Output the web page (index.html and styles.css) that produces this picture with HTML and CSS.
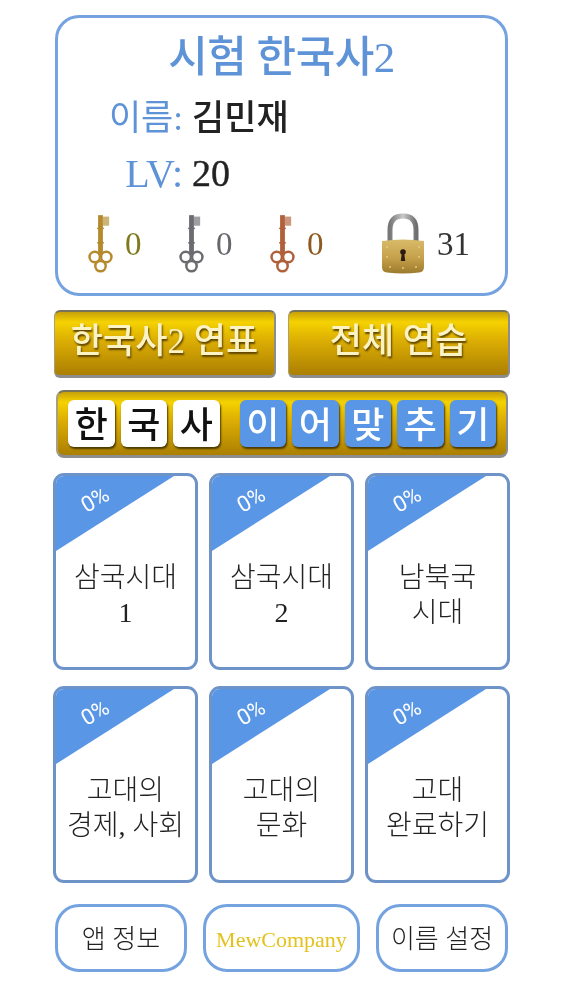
FILE: index.html
```html
<!DOCTYPE html>
<html lang="ko">
<head>
<meta charset="utf-8">
<title>시험 한국사2</title>
<link rel="stylesheet" href="styles.css">
</head>
<body>
<svg class="defs" width="0" height="0" aria-hidden="true">
  <defs>
    <symbol id="key" viewBox="0 0 26 62">
      <rect x="10.500" y="1" width="5" height="41" fill="currentColor"/>
      <rect x="15.500" y="2.500" width="6.500" height="9.500" fill="currentColor" opacity=".65"/>
      <rect x="9.500" y="14" width="7" height="1.500" fill="currentColor"/>
      <rect x="9.500" y="29" width="7" height="1.500" fill="currentColor"/>
      <g fill="none" stroke="currentColor" stroke-width="2.600">
        <circle cx="7" cy="44.500" r="5.400"/>
        <circle cx="19" cy="44.500" r="5.400"/>
        <circle cx="13" cy="54" r="5.400"/>
      </g>
    </symbol>
    <linearGradient id="lockBody" x1="0" y1="0" x2="0" y2="1">
      <stop offset="0" stop-color="#d9bb6a"/>
      <stop offset=".55" stop-color="#c5a04a"/>
      <stop offset="1" stop-color="#9c7a2e"/>
    </linearGradient>
    <linearGradient id="lockBar" x1="0" y1="0" x2="1" y2="0">
      <stop offset="0" stop-color="#777"/>
      <stop offset=".5" stop-color="#c9c9c9"/>
      <stop offset="1" stop-color="#6f6f6f"/>
    </linearGradient>
  </defs>
</svg>
<main class="page">
  <section class="info">
    <h1 class="title">시험 한국사2</h1>
    <div class="row row-name"><span class="label">이름:</span><span class="value">김민재</span></div>
    <div class="row row-lv"><span class="label">LV:</span><span class="value">20</span></div>
    <div class="stats">
      <svg class="key key-gold"><use href="#key"/></svg><span class="num num-gold">0</span>
      <svg class="key key-silver"><use href="#key"/></svg><span class="num num-silver">0</span>
      <svg class="key key-bronze"><use href="#key"/></svg><span class="num num-bronze">0</span>
      <svg class="lock" viewBox="0 0 44 62">
        <path d="M9 30V17C9 7 14 3 22 3s13 4 13 14v13" fill="none" stroke="url(#lockBar)" stroke-width="5"/>
        <path d="M1 28q21-3 42 0v26q0 5-5 5.500q-16 2-32 0q-5-.5-5-5.500z" fill="url(#lockBody)"/>
        <g fill="#e8cf85">
          <circle cx="6" cy="34" r=".9"/><circle cx="38" cy="34" r=".9"/>
          <circle cx="6" cy="44" r=".9"/><circle cx="38" cy="44" r=".9"/>
          <circle cx="9" cy="54" r=".9"/><circle cx="35" cy="54" r=".9"/><circle cx="22" cy="55" r=".9"/>
        </g>
        <circle cx="22" cy="39" r="2.800" fill="#2a1a10"/>
        <path d="M20.800 40h2.400l1 8h-4.400z" fill="#2a1a10"/>
      </svg>
      <span class="num num-lock">31</span>
    </div>
  </section>

  <div class="actions">
    <button class="gold-btn">한국사2 연표</button>
    <button class="gold-btn">전체 연습</button>
  </div>

  <div class="banner">
    <span class="tile">한</span><span class="tile">국</span><span class="tile tile-last">사</span>
    <span class="tile tile-blue">이</span><span class="tile tile-blue">어</span><span class="tile tile-blue">맞</span><span class="tile tile-blue">추</span><span class="tile tile-blue">기</span>
  </div>

  <div class="grid">
    <a class="card"><span class="ribbon"></span><span class="pct">0%</span><span class="card-text">삼국시대<br>1</span></a>
    <a class="card"><span class="ribbon"></span><span class="pct">0%</span><span class="card-text">삼국시대<br>2</span></a>
    <a class="card"><span class="ribbon"></span><span class="pct">0%</span><span class="card-text">남북국<br>시대</span></a>
    <a class="card"><span class="ribbon"></span><span class="pct">0%</span><span class="card-text">고대의<br>경제, 사회</span></a>
    <a class="card"><span class="ribbon"></span><span class="pct">0%</span><span class="card-text">고대의<br>문화</span></a>
    <a class="card"><span class="ribbon"></span><span class="pct">0%</span><span class="card-text">고대<br>완료하기</span></a>
  </div>

  <div class="footer">
    <button class="foot foot-a">앱 정보</button>
    <button class="foot foot-b">MewCompany</button>
    <button class="foot foot-c">이름 설정</button>
  </div>
</main>
</body>
</html>
```

FILE: styles.css
```css
* { box-sizing: border-box; }
html, body { margin: 0; padding: 0; background: #fff; }
body {
  width: 563px;
  height: 1000px;
  overflow: hidden;
  font-family: "Noto Sans CJK KR", "Liberation Serif", serif;
  color: #222;
}
.defs { position: absolute; }
.page { width: 457px; margin-left: 53px; padding-top: 15px; filter: blur(.4px); }

.info {
  margin: 0 2px;
  height: 281px;
  border: 3px solid #75a3e0;
  border-radius: 24px;
  padding-top: 14px;
}
.title {
  margin: 0;
  font: 500 43px/52px "Liberation Serif", "Noto Sans CJK KR", serif;
  color: #5f93d8;
  text-align: center;
  letter-spacing: -.5px;
}
.row {
  display: grid;
  grid-template-columns: 125px auto;
  column-gap: 9px;
  align-items: center;
  height: 56px;
  font-family: "Liberation Serif", "Noto Sans CJK KR", serif;
}
.row-name { margin-top: 2px; }
.row-lv { margin-top: 3px; }
.label { text-align: right; color: #5f93d8; font-size: 35px; }
.value { color: #222; font-size: 35px; font-weight: 500; }
.row-lv .value { font-size: 38px; -webkit-text-stroke: .4px #222; }
.row-lv .label { font-size: 40px; }

.stats { display: flex; align-items: center; margin-top: 12px; height: 62px; padding-left: 30px; }
.key { width: 25px; height: 62px; flex: none; }
.key-gold { color: #b48a2c; }
.key-silver { color: #6c6c70; }
.key-bronze { color: #b0603a; }
.num { font: 33px/1 "Liberation Serif", serif; margin-left: 12px; }
.num-gold { color: #7f7a1e; width: 54px; }
.num-silver { color: #66666c; width: 54px; }
.num-bronze { color: #8f5a1e; width: 74px; }
.num-lock { color: #333; }
.lock { width: 44px; height: 62px; flex: none; }

.actions { display: flex; justify-content: space-between; margin: 14px 0 0 1px; }
.gold-btn {
  width: 222px;
  height: 68px;
  padding: 0 0 4px;
  border: 0;
  border-top: 2px solid #77725a;
  border-bottom: 3px solid #8d8d8d;
  border-left: 1px solid #a9a07a;
  border-right: 2px solid #8d8d8d;
  border-radius: 6px;
  background: linear-gradient(#c9a10a 0, #f5d200 16%, #dcae04 45%, #ab7f02 100%);
  font: 500 35px/1 "Liberation Serif", "Noto Sans CJK KR", serif;
  color: #fbf3c4;
  text-shadow: 1px 2px 2px #5c4200;
}

.banner {
  display: flex;
  align-items: center;
  gap: 6px;
  margin: 12px 2px 0 3px;
  height: 68px;
  padding-left: 10px;
  border-top: 2px solid #77725a;
  border-bottom: 3px solid #8d8d8d;
  border-left: 2px solid #a9a07a;
  border-right: 2px solid #8d8d8d;
  border-radius: 8px;
  background: linear-gradient(#c9a10a 0, #f5d200 16%, #dcae04 45%, #ab7f02 100%);
}
.tile {
  width: 46.500px;
  height: 47px;
  flex: none;
  border-radius: 6px;
  background: #fff;
  box-shadow: 1px 2px 2px #4a3800;
  color: #111;
  font: 500 36px/44px "Noto Sans CJK KR", sans-serif;
  text-align: center;
}
.tile-last { margin-right: 14px; }
.tile-blue { background: #5a96e6; color: #fff; }

.grid {
  display: grid;
  grid-template-columns: repeat(3, 145px);
  grid-auto-rows: 197px;
  column-gap: 11px;
  row-gap: 16px;
  margin-top: 15px;
}
.card {
  position: relative;
  display: flex;
  align-items: center;
  justify-content: center;
  overflow: hidden;
  border: 3px solid #6d93c9;
  border-radius: 11px;
  background: #fff;
}
.ribbon {
  position: absolute;
  left: 0;
  top: 0;
  width: 118px;
  height: 75px;
  background: #5a96e6;
  clip-path: polygon(0 0, 100% 0, 0 100%);
}
.pct {
  position: absolute;
  left: 25px;
  top: 10px;
  font: 22px/28px "Roboto", sans-serif;
  color: #fff;
  transform: rotate(-30deg);
}
.card-text {
  margin-top: 47px;
  font: 300 28px/35px "Liberation Serif", "Noto Sans CJK KR", serif;
  color: #222;
  text-align: center;
}

.footer { display: flex; margin: 21px 0 0 2px; }
.foot {
  height: 68px;
  padding: 4px 0 0;
  border: 3px solid #75a3e0;
  border-radius: 24px;
  background: #fff;
  font: 300 26px/1 "Liberation Serif", "Noto Sans CJK KR", serif;
  color: #222;
}
.foot-a { width: 132px; }
.foot-b { width: 157px; margin-left: 16px; color: #e3c21e; font-size: 22px; font-weight: 400; }
.foot-c { width: 132px; margin-left: 16px; }
```
